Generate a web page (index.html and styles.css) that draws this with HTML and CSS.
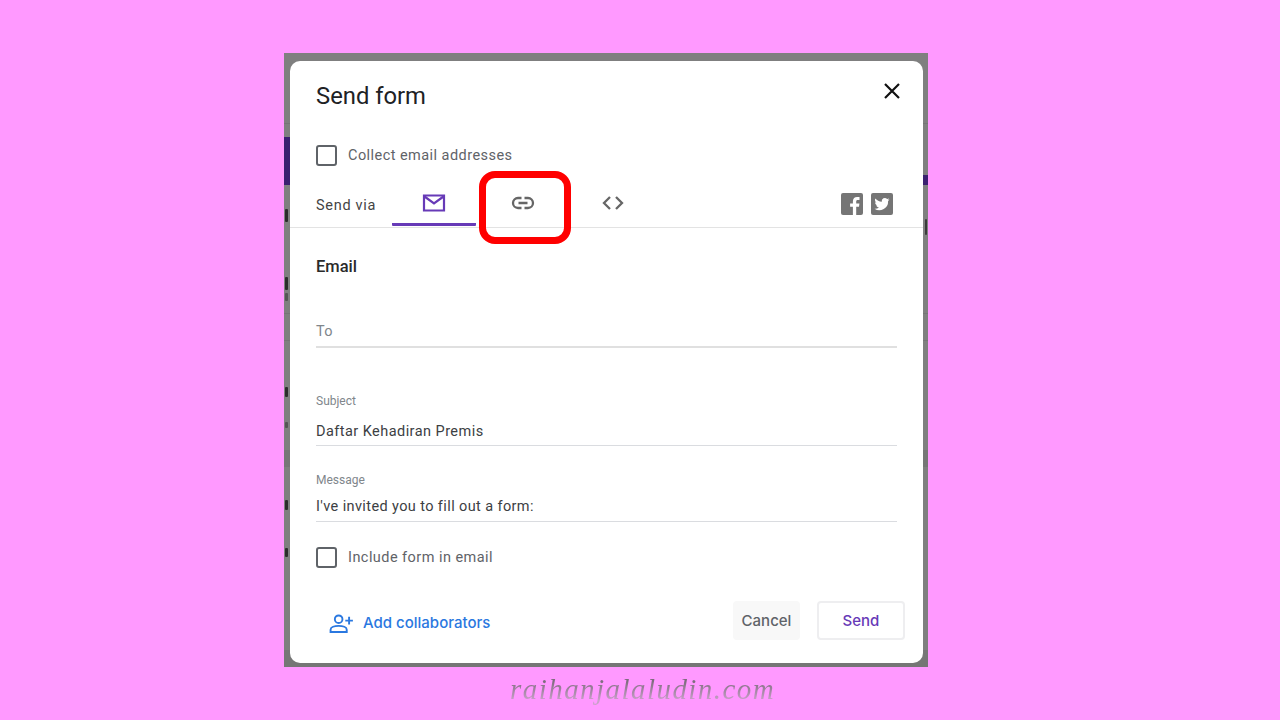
FILE: index.html
```html
<!DOCTYPE html>
<html lang="en">
<head>
<meta charset="utf-8">
<title>Send form</title>
<link rel="stylesheet" href="styles.css">
</head>
<body>
<main class="shot">
  <div class="backdrop">
    <i class="band band-left"></i>
    <i class="band band-right"></i>
    <i class="rule rule-1"></i>
    <i class="rule rule-2"></i>
    <i class="rule rule-3"></i>
    <i class="shade shade-1"></i>
    <i class="shade shade-2"></i>
    <i class="sliver sliver-1"></i>
    <i class="sliver sliver-2"></i>
    <i class="sliver sliver-3"></i>
    <i class="sliver sliver-4"></i>
    <i class="sliver sliver-5"></i>
    <i class="sliver sliver-6"></i>
    <i class="sliver sliver-7"></i>
    <i class="sliver sliver-8"></i>
    <section class="dialog">
      <header class="head">
        <h1 class="title">Send form</h1>
        <svg class="close" viewBox="0 0 18 18"><path d="M2 2l14 14M16 2L2 16"/></svg>
      </header>
      <label class="check check-collect"><span class="box"></span><span>Collect email addresses</span></label>
      <div class="tabs">
        <span class="via">Send via</span>
        <span class="tab tab-mail">
          <svg class="ico" viewBox="0 0 24 24"><path class="purple" d="M2 4.500h20v15H2z"/><path class="purple" d="M2.500 5.500L12 12.500l9.500-7"/></svg>
        </span>
        <span class="tab tab-link">
          <svg class="ico" viewBox="0 0 24 24"><path class="grey" d="M10.500 7H7a5 5 0 0 0 0 10h3.500M13.500 7H17a5 5 0 0 1 0 10h-3.500M7.500 12h9"/></svg>
          <i class="marker"></i>
        </span>
        <span class="tab tab-code">
          <svg class="ico" viewBox="0 0 24 24"><path class="grey" d="M9 6l-6 6 6 6M15 6l6 6-6 6"/></svg>
        </span>
        <span class="social">
          <svg class="soc" viewBox="0 0 22 22"><rect width="22" height="22" rx="2" fill="#757575"/><path fill="#fff" d="M15.200 22v-8.300h2.800l.4-3.200h-3.200V8.500c0-.9.300-1.600 1.600-1.600h1.700V4c-.3 0-1.300-.1-2.400-.1-2.500 0-4.200 1.500-4.200 4.300v2.300H9.100v3.200h2.800V22z"/></svg>
          <svg class="soc" viewBox="0 0 22 22"><rect width="22" height="22" rx="2" fill="#757575"/><path fill="#fff" d="M18.500 6.400c-.6.300-1.200.4-1.800.5.600-.4 1.100-1 1.400-1.700-.6.400-1.300.6-2 .8a3.100 3.100 0 0 0-5.300 2.800C8.200 8.700 5.900 7.400 4.400 5.500c-.8 1.400-.4 3.200 1 4.100-.5 0-1-.2-1.400-.4 0 1.500 1.100 2.800 2.500 3.100-.5.100-.9.100-1.400 0 .4 1.200 1.500 2.100 2.900 2.100A6.300 6.300 0 0 1 3.500 15.700 8.800 8.800 0 0 0 17.100 7.900c.5-.4 1-.9 1.400-1.500z"/></svg>
        </span>
      </div>
      <div class="body">
        <h2 class="email">Email</h2>
        <div class="field field-to"><span class="placeholder">To</span></div>
        <div class="field field-subject"><span class="label">Subject</span><span class="value">Daftar Kehadiran Premis</span></div>
        <div class="field field-message"><span class="label">Message</span><span class="value value-tight">I've invited you to fill out a form:</span></div>
        <label class="check check-include"><span class="box"></span><span>Include form in email</span></label>
      </div>
      <footer class="foot">
        <span class="collab">
          <svg class="collab-ico" viewBox="0 0 26 20"><circle cx="10" cy="5.500" r="4"/><path d="M1.500 19v-2.500c0-2.500 4-4 8.500-4s8.500 1.500 8.500 4V19z"/><path d="M21 3v8M17 7h8"/></svg>
          <span class="collab-text">Add collaborators</span>
        </span>
        <span class="actions">
          <span class="btn btn-cancel">Cancel</span>
          <span class="btn btn-send">Send</span>
        </span>
      </footer>
    </section>
  </div>
  <p class="brand">raihanjalaludin.com</p>
</main>
</body>
</html>
```
FILE: styles.css
```css
* { box-sizing: border-box; }
html, body { margin: 0; height: 100%; }
body { background: #ff99ff; font-family: Roboto, "Liberation Sans", sans-serif; overflow: hidden; }
.shot { width: 1280px; height: 720px; padding: 53px 352px 0 284px; display: flex; flex-direction: column; }
.backdrop { position: relative; overflow: hidden; width: 644px; height: 614px; background: #7f7f7f; padding: 8px 5px 4px 6px; }
.band { position: absolute; background: #3a2070; }
.band-left { left: 0; top: 84px; width: 6px; height: 48px; }
.band-right { right: 0; top: 122px; width: 5px; height: 10px; }
.rule { position: absolute; left: 0; right: 0; height: 1px; background: #757575; }
.rule-1 { top: 70px; }
.rule-2 { top: 260px; }
.rule-3 { top: 287px; }
.shade { position: absolute; left: 0; right: 0; background: #767676; }
.shade-1 { top: 397px; height: 17px; }
.shade-2 { top: 597px; height: 17px; }
.sliver { position: absolute; left: 1px; width: 3px; background: #2c2c2c; border-radius: 1px; }
.sliver-1 { top: 156px; height: 13px; }
.sliver-2 { top: 224px; height: 13px; }
.sliver-3 { top: 240px; height: 8px; background: #555; }
.sliver-4 { top: 334px; height: 10px; }
.sliver-5 { top: 369px; height: 6px; background: #555; }
.sliver-6 { top: 447px; height: 10px; }
.sliver-7 { top: 495px; height: 9px; }
.sliver-8 { left: auto; right: 1px; top: 166px; height: 16px; width: 2px; background: #3a3a3a; }
.dialog { position: relative; height: 602px; background: #fff; border-radius: 10px; display: flex; flex-direction: column; }
.head { display: flex; justify-content: space-between; align-items: flex-start; padding: 21px 22px 0 26px; height: 78px; }
.title { margin: 0; font-size: 23.800px; line-height: 28px; font-weight: 400; color: #202124; }
.close { width: 18px; height: 18px; fill: none; stroke: #111; stroke-width: 2.200; }
.check { display: flex; align-items: center; gap: 11px; padding-left: 26px; font-size: 14.500px; letter-spacing: .45px; color: #5f6368; }
.box { width: 21px; height: 21px; border: 2px solid #5f6368; border-radius: 3px; }
.check-collect { height: 32px; }
.tabs { display: flex; align-items: flex-start; height: 57px; padding: 14px 26px 0; border-bottom: 1px solid #e3e3e3; }
.via { width: 76px; font-size: 14.500px; letter-spacing: .7px; color: #444; padding-top: 12px; }
.tab { position: relative; display: flex; justify-content: center; padding-top: 6px; height: 41px; }
.tab-mail { width: 84px; border-bottom: 3px solid #673ab7; border-radius: 1px; }
.tab-link { width: 94px; }
.tab-code { width: 85px; }
.ico { width: 24px; height: 24px; fill: none; }
.purple { stroke: #673ab7; stroke-width: 2.200; }
.grey { stroke: #666; stroke-width: 2.300; }
.marker { position: absolute; left: 3px; top: -14px; width: 92px; height: 73px; border: 7px solid #f00; border-radius: 16px; }
.social { margin-left: auto; margin-right: 4px; display: flex; gap: 8px; padding-top: 8px; }
.soc { width: 22px; height: 22px; }
.body { padding: 0 26px; position: relative; flex: 1; }
.email { margin: 0; padding-top: 29px; font-size: 16.500px; line-height: 20px; font-weight: 500; color: #2a2a2a; }
.field { display: flex; flex-direction: column; justify-content: flex-end; width: 581px; border-bottom: 1px solid #dadce0; }
.placeholder { font-size: 14.500px; line-height: 20px; color: #80868b; letter-spacing: .3px; }
.label { font-size: 12px; line-height: 16px; color: #80868b; }
.value { font-size: 14.500px; line-height: 20px; color: #3c4043; letter-spacing: .45px; }
.value-tight { letter-spacing: .39px; }
.field-to { height: 54px; padding-bottom: 4px; margin-top: 17px; border-bottom: 2px solid #e0e0e0; }
.field-subject { height: 64px; margin-top: 34px; padding-bottom: 3px; }
.field-subject .label { margin-bottom: 13px; }
.field-message { height: 55px; margin-top: 21px; padding-bottom: 4px; }
.field-message .label { margin-bottom: 9px; }
.check-include { padding-left: 0; height: 32px; margin-top: 19px; }
.foot { display: flex; justify-content: space-between; align-items: center; padding: 0 18px 0 39px; height: 62px; margin-bottom: 9px; }
.collab { display: flex; align-items: center; gap: 9px; font-family: Inter, Roboto, sans-serif; font-size: 15px; font-weight: 500; color: #2a78e0; }
.collab-text { margin-top: -2px; }
.collab-ico { width: 25px; height: 19px; fill: none; stroke: #2a78e0; stroke-width: 2; }
.actions { display: flex; gap: 17px; margin-bottom: 6px; }
.btn { display: flex; align-items: center; justify-content: center; height: 39px; border-radius: 4px; font-family: Inter, Roboto, sans-serif; font-size: 15px; font-weight: 500; }
.btn-cancel { width: 67px; background: #f8f8f8; color: #5f6368; }
.btn-send { width: 88px; border: 2px solid #eeeef0; color: #673ab7; }
.brand { margin: 6px 0 0 226px; align-self: flex-start; font-family: "Liberation Serif", serif; font-style: italic; font-size: 29px; line-height: 32px; letter-spacing: 1.450px; white-space: nowrap; color: transparent; background: linear-gradient(180deg, #7d6b7d 25%, #c9a0c9 85%); -webkit-background-clip: text; background-clip: text; }
```
